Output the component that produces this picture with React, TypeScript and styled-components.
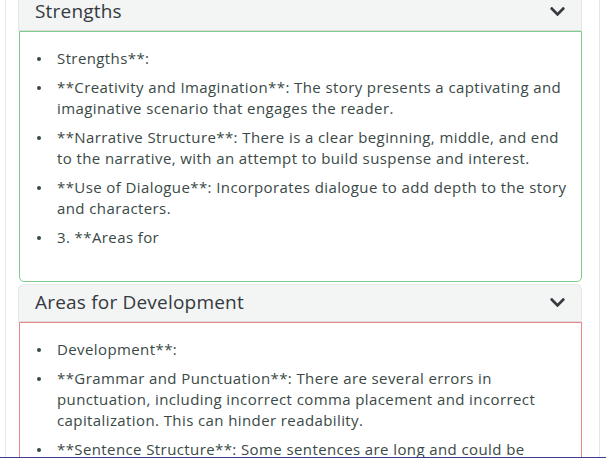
import React from "react";
import styled, { createGlobalStyle } from "styled-components";
import { FaChevronDown } from "react-icons/fa";

const Global = createGlobalStyle`
  html, body { margin: 0; padding: 0; background: #ffffff; }
  body { font-family: "Open Sans", "DejaVu Sans", sans-serif; }
  * { box-sizing: border-box; }
`;

const Viewport = styled.div`
  height: 458px;
  overflow: hidden;
  border-bottom: 1px solid #3d3d8c;
`;

const Panel = styled.div`
  margin: -7px 0 0 5px;
  width: 595px;
  min-height: 480px;
  border-left: 1px solid #e7e7e7;
  border-right: 1px solid #e7e7e7;
  padding: 0 17px 0 12px;
  display: flex;
  flex-direction: column;
  gap: 2px;
`;

const Item = styled.section`
  display: flex;
  flex-direction: column;
`;

const Header = styled.div`
  display: flex;
  align-items: center;
  justify-content: space-between;
  height: 38px;
  padding: 0 15px 2px 16px;
  background: #f3f4f4;
  border: 1px solid #e6e7e7;
  border-bottom-color: #dcdddd;
  border-radius: 6px 6px 0 0;
  color: #343a40;
  font-size: 19px;
  line-height: 24px;
  letter-spacing: 0.2px;
`;

const Chevron = styled(FaChevronDown)`
  width: 17px;
  height: 17px;
  color: #343a40;
`;

const Body = styled.div<{ $tone: string }>`
  margin-left: 1px;
  border-width: 1px;
  border-style: solid;
  border-color: ${(p) => p.$tone};
  border-radius: 0 0 5px 5px;
  padding: 16px 10px 33px 16px;
  background: #fff;
`;

const List = styled.ul`
  list-style: none;
  margin: 0;
  padding: 0;
  display: flex;
  flex-direction: column;
  gap: 8px;
`;

const Row = styled.li`
  display: grid;
  grid-template-columns: 21px 1fr;
  color: #3a4946;
  font-size: 15px;
  line-height: 21px;
  letter-spacing: 0.4px;
`;

const Dot = styled.span`
  width: 4px;
  height: 4px;
  border-radius: 50%;
  background: #3a4946;
  margin-top: 9px;
  margin-left: 1px;
`;

const sections = [
  {
    title: "Strengths",
    tone: "#7fcc8e",
    items: [
      "Strengths**:",
      "**Creativity and Imagination**: The story presents a captivating and imaginative scenario that engages the reader.",
      "**Narrative Structure**: There is a clear beginning, middle, and end to the narrative, with an attempt to build suspense and interest.",
      "**Use of Dialogue**: Incorporates dialogue to add depth to the story and characters.",
      "3. **Areas for",
    ],
  },
  {
    title: "Areas for Development",
    tone: "#eb8585",
    items: [
      "Development**:",
      "**Grammar and Punctuation**: There are several errors in punctuation, including incorrect comma placement and incorrect capitalization. This can hinder readability.",
      "**Sentence Structure**: Some sentences are long and could be broken up for better clarity and flow.",
    ],
  },
];

export default function App() {
  return (
    <>
      <Global />
      <Viewport>
        <Panel>
          {sections.map((s) => (
            <Item key={s.title}>
              <Header>
                <span>{s.title}</span>
                <Chevron />
              </Header>
              <Body $tone={s.tone}>
                <List>
                  {s.items.map((t) => (
                    <Row key={t}>
                      <Dot />
                      <span>{t}</span>
                    </Row>
                  ))}
                </List>
              </Body>
            </Item>
          ))}
        </Panel>
      </Viewport>
    </>
  );
}
